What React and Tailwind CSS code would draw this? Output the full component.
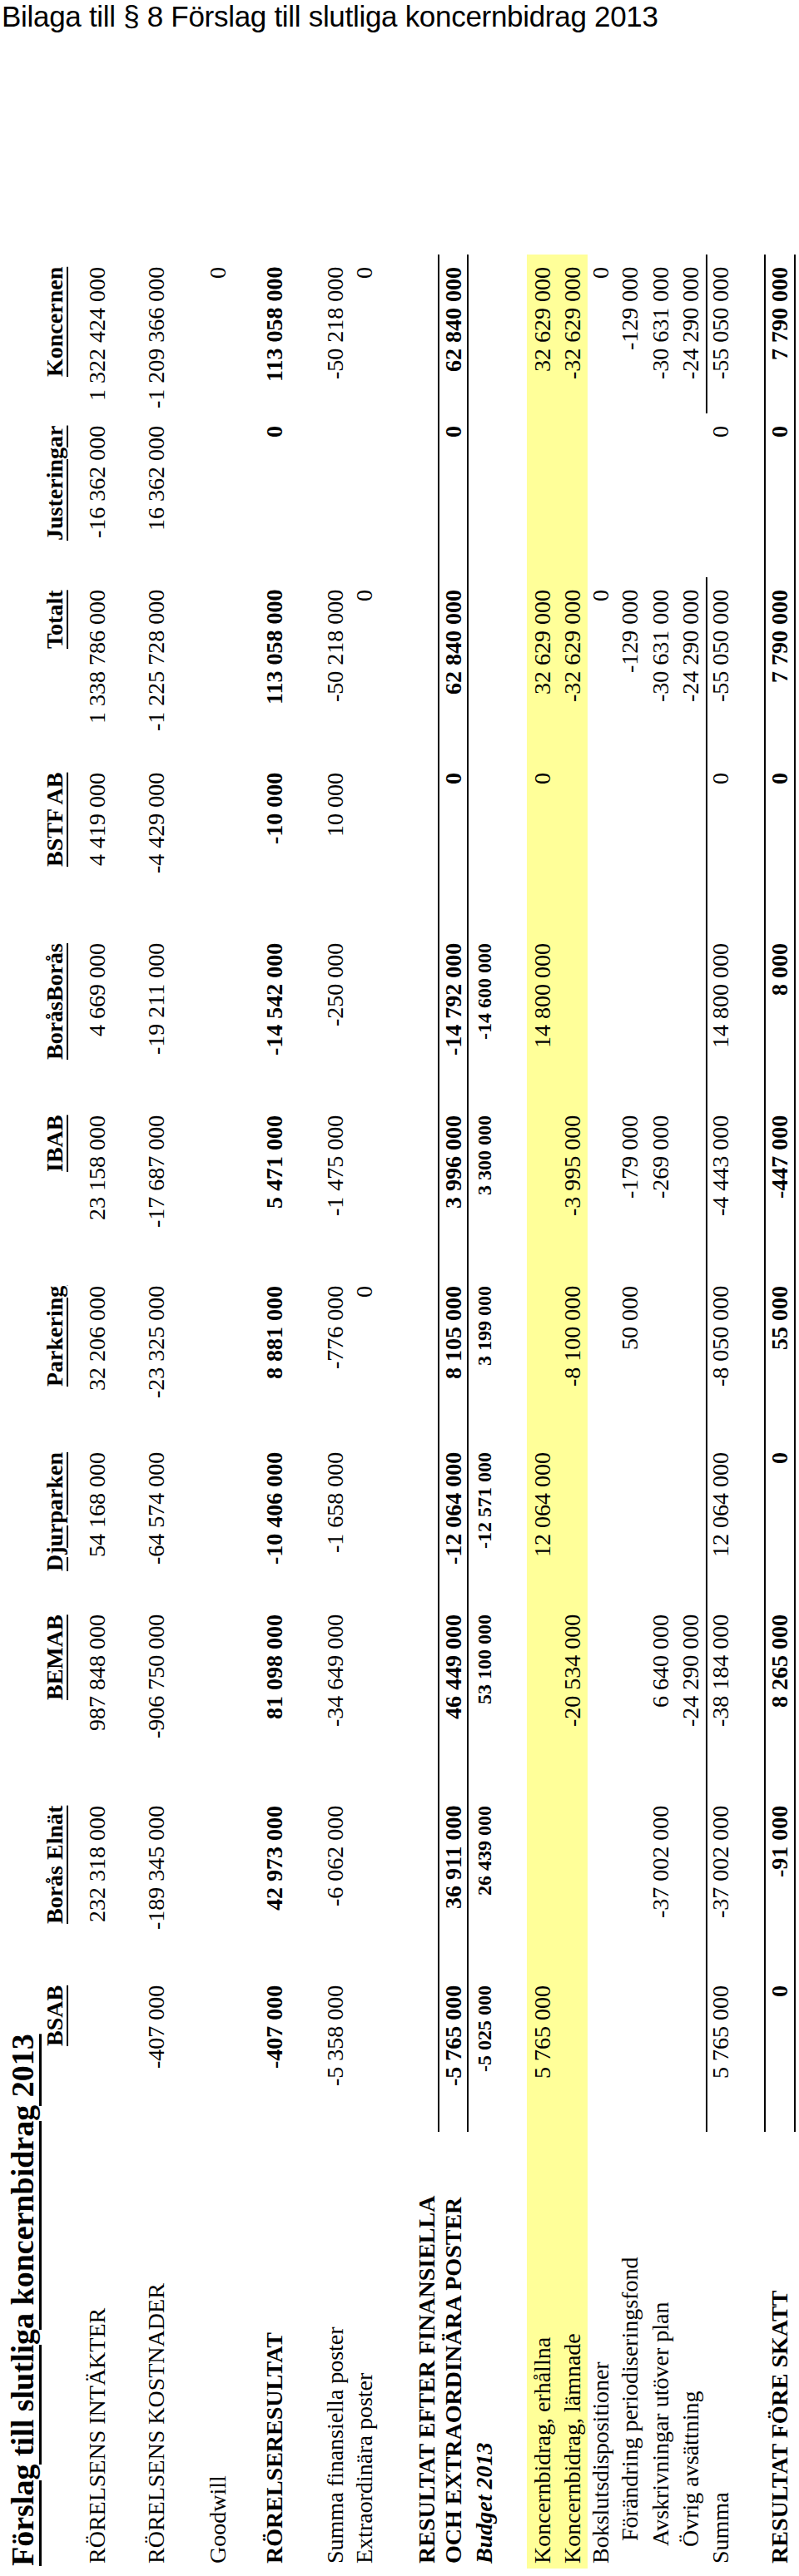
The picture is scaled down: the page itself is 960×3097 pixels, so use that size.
const cols = [
  "BSAB",
  "Borås Elnät",
  "BEMAB",
  "Djurparken",
  "Parkering",
  "IBAB",
  "BoråsBorås",
  "BSTF AB",
  "Totalt",
  "Justeringar",
  "Koncernen",
];

const e = "";

const rows = {
  intakter: [e, "232 318 000", "987 848 000", "54 168 000", "32 206 000", "23 158 000", "4 669 000", "4 419 000", "1 338 786 000", "-16 362 000", "1 322 424 000"],
  kostnader: ["-407 000", "-189 345 000", "-906 750 000", "-64 574 000", "-23 325 000", "-17 687 000", "-19 211 000", "-4 429 000", "-1 225 728 000", "16 362 000", "-1 209 366 000"],
  goodwill: [e, e, e, e, e, e, e, e, e, e, "0"],
  rorelse: ["-407 000", "42 973 000", "81 098 000", "-10 406 000", "8 881 000", "5 471 000", "-14 542 000", "-10 000", "113 058 000", "0", "113 058 000"],
  finans: ["-5 358 000", "-6 062 000", "-34 649 000", "-1 658 000", "-776 000", "-1 475 000", "-250 000", "10 000", "-50 218 000", e, "-50 218 000"],
  extra: [e, e, e, e, "0", e, e, e, "0", e, "0"],
  efter: ["-5 765 000", "36 911 000", "46 449 000", "-12 064 000", "8 105 000", "3 996 000", "-14 792 000", "0", "62 840 000", "0", "62 840 000"],
  budget: ["-5 025 000", "26 439 000", "53 100 000", "-12 571 000", "3 199 000", "3 300 000", "-14 600 000", e, e, e, e],
  erhallna: ["5 765 000", e, e, "12 064 000", e, e, "14 800 000", "0", "32 629 000", e, "32 629 000"],
  lamnade: [e, e, "-20 534 000", e, "-8 100 000", "-3 995 000", e, e, "-32 629 000", e, "-32 629 000"],
  bokslut: [e, e, e, e, e, e, e, e, "0", e, "0"],
  period: [e, e, e, e, "50 000", "-179 000", e, e, "-129 000", e, "-129 000"],
  avskr: [e, "-37 002 000", "6 640 000", e, e, "-269 000", e, e, "-30 631 000", e, "-30 631 000"],
  ovrig: [e, e, "-24 290 000", e, e, e, e, e, "-24 290 000", e, "-24 290 000"],
  summa: ["5 765 000", "-37 002 000", "-38 184 000", "12 064 000", "-8 050 000", "-4 443 000", "14 800 000", "0", "-55 050 000", "0", "-55 050 000"],
  skatt: ["0", "-91 000", "8 265 000", "0", "55 000", "-447 000", "8 000", "0", "7 790 000", "0", "7 790 000"],
};

// landscape table, laid out in vertical writing mode and turned 180deg
const grid =
  "ms-[9px] [inline-size:2782px] grid grid-cols-[525px_191px_216px_230px_195px_200px_205px_207px_205px_220px_197px_191px]";

function Row({ cls, label, labelCls = "", values, valueCls = "" }) {
  return (
    <div className={`${grid} ${cls}`}>
      <div className={`whitespace-nowrap ${labelCls}`}>{label}</div>
      {values.map((v, i) => (
        <div key={i} className={`pe-[15px] text-end whitespace-nowrap ${valueCls}`}>
          {v}
        </div>
      ))}
    </div>
  );
}

function Rule({ cls = "", gap = false }) {
  return (
    <div className={`${grid} [block-size:2px] ${cls}`}>
      {gap ? (
        <>
          <div className="col-start-2 col-end-11 bg-black" />
          <div className="col-start-12 col-end-13 bg-black" />
        </>
      ) : (
        <div className="col-start-2 col-end-13 bg-black" />
      )}
    </div>
  );
}

export default function App() {
  return (
    <div className="w-[960px] h-[3097px] bg-white text-black overflow-hidden">
      <div className="h-[56px] ps-[2px] font-['Liberation_Sans',Arial,sans-serif] text-[35px] tracking-[-0.3px] leading-[40px] whitespace-nowrap">
        Bilaga till § 8 Förslag till slutliga koncernbidrag 2013
      </div>

      <div className="[writing-mode:vertical-rl] rotate-180 w-[960px] h-[3041px] font-['Liberation_Serif','Times_New_Roman',serif] text-[28px]">
        <div className="[block-size:54px] leading-[54px] ps-[12px] text-[38px] font-bold underline [text-underline-position:left] whitespace-nowrap">
          Förslag till slutliga koncernbidrag 2013
        </div>

        <div className={`${grid} [block-size:24px] leading-[24px] font-bold`}>
          <div />
          {cols.map((c) => (
            <div key={c} className="pe-[15px] text-end whitespace-nowrap">
              <span className="underline [text-underline-position:left]">{c}</span>
            </div>
          ))}
        </div>

        <Row
          cls="[block-size:30px] leading-[30px] [margin-block-start:24px]"
          labelCls="ps-[6px]"
          label="RÖRELSENS INTÄKTER"
          values={rows.intakter}
        />
        <Row
          cls="[block-size:30px] leading-[30px] [margin-block-start:41px]"
          labelCls="ps-[6px]"
          label="RÖRELSENS KOSTNADER"
          values={rows.kostnader}
        />
        <Row
          cls="[block-size:30px] leading-[30px] [margin-block-start:44px]"
          labelCls="ps-[6px]"
          label="Goodwill"
          values={rows.goodwill}
        />
        <Row
          cls="[block-size:30px] leading-[30px] [margin-block-start:38px] font-bold"
          labelCls="ps-[6px]"
          label="RÖRELSERESULTAT"
          values={rows.rorelse}
        />
        <Row
          cls="[block-size:30px] leading-[30px] [margin-block-start:43px]"
          labelCls="ps-[6px]"
          label="Summa finansiella poster"
          values={rows.finans}
        />
        <Row
          cls="[block-size:30px] leading-[30px] [margin-block-start:5px]"
          labelCls="ps-[6px]"
          label="Extraordinära poster"
          values={rows.extra}
        />

        <div className="ms-[9px] ps-[6px] [block-size:26px] leading-[26px] [margin-block-start:47px] font-bold whitespace-nowrap">
          RESULTAT EFTER FINANSIELLA
        </div>
        <Rule />
        <Row
          cls="[block-size:33px] leading-[33px] font-bold"
          labelCls="ps-[6px]"
          label="OCH EXTRAORDINÄRA POSTER"
          values={rows.efter}
        />
        <Rule />
        <Row
          cls="[block-size:38px] leading-[38px]"
          labelCls="ps-[6px] font-bold italic"
          label="Budget 2013"
          values={rows.budget}
          valueCls="text-[24px] font-bold"
        />

        <Row
          cls="[block-size:37px] leading-[37px] [margin-block-start:32px] bg-[#ffff99]"
          labelCls="ps-[6px]"
          label="Koncernbidrag, erhållna"
          values={rows.erhallna}
        />
        <Row
          cls="[block-size:36px] leading-[36px] bg-[#ffff99]"
          labelCls="ps-[6px]"
          label="Koncernbidrag, lämnade"
          values={rows.lamnade}
        />
        <Row
          cls="[block-size:32px] leading-[32px]"
          labelCls="ps-[6px]"
          label="Bokslutsdispositioner"
          values={rows.bokslut}
        />
        <Row
          cls="[block-size:38px] leading-[38px]"
          labelCls="ps-[33px]"
          label="Förändring periodiseringsfond"
          values={rows.period}
        />
        <Row
          cls="[block-size:36px] leading-[36px]"
          labelCls="ps-[27px]"
          label="Avskrivningar utöver plan"
          values={rows.avskr}
        />
        <Row
          cls="[block-size:36px] leading-[36px]"
          labelCls="ps-[26px]"
          label="Övrig avsättning"
          values={rows.ovrig}
        />
        <Rule gap />
        <Row
          cls="[block-size:32px] leading-[32px]"
          labelCls="ps-[6px]"
          label="Summa"
          values={rows.summa}
        />

        <Rule cls="[margin-block-start:36px]" />
        <Row
          cls="[block-size:34px] leading-[34px] font-bold"
          labelCls="ps-[6px]"
          label="RESULTAT FÖRE SKATT"
          values={rows.skatt}
        />
        <Rule />
      </div>
    </div>
  );
}
